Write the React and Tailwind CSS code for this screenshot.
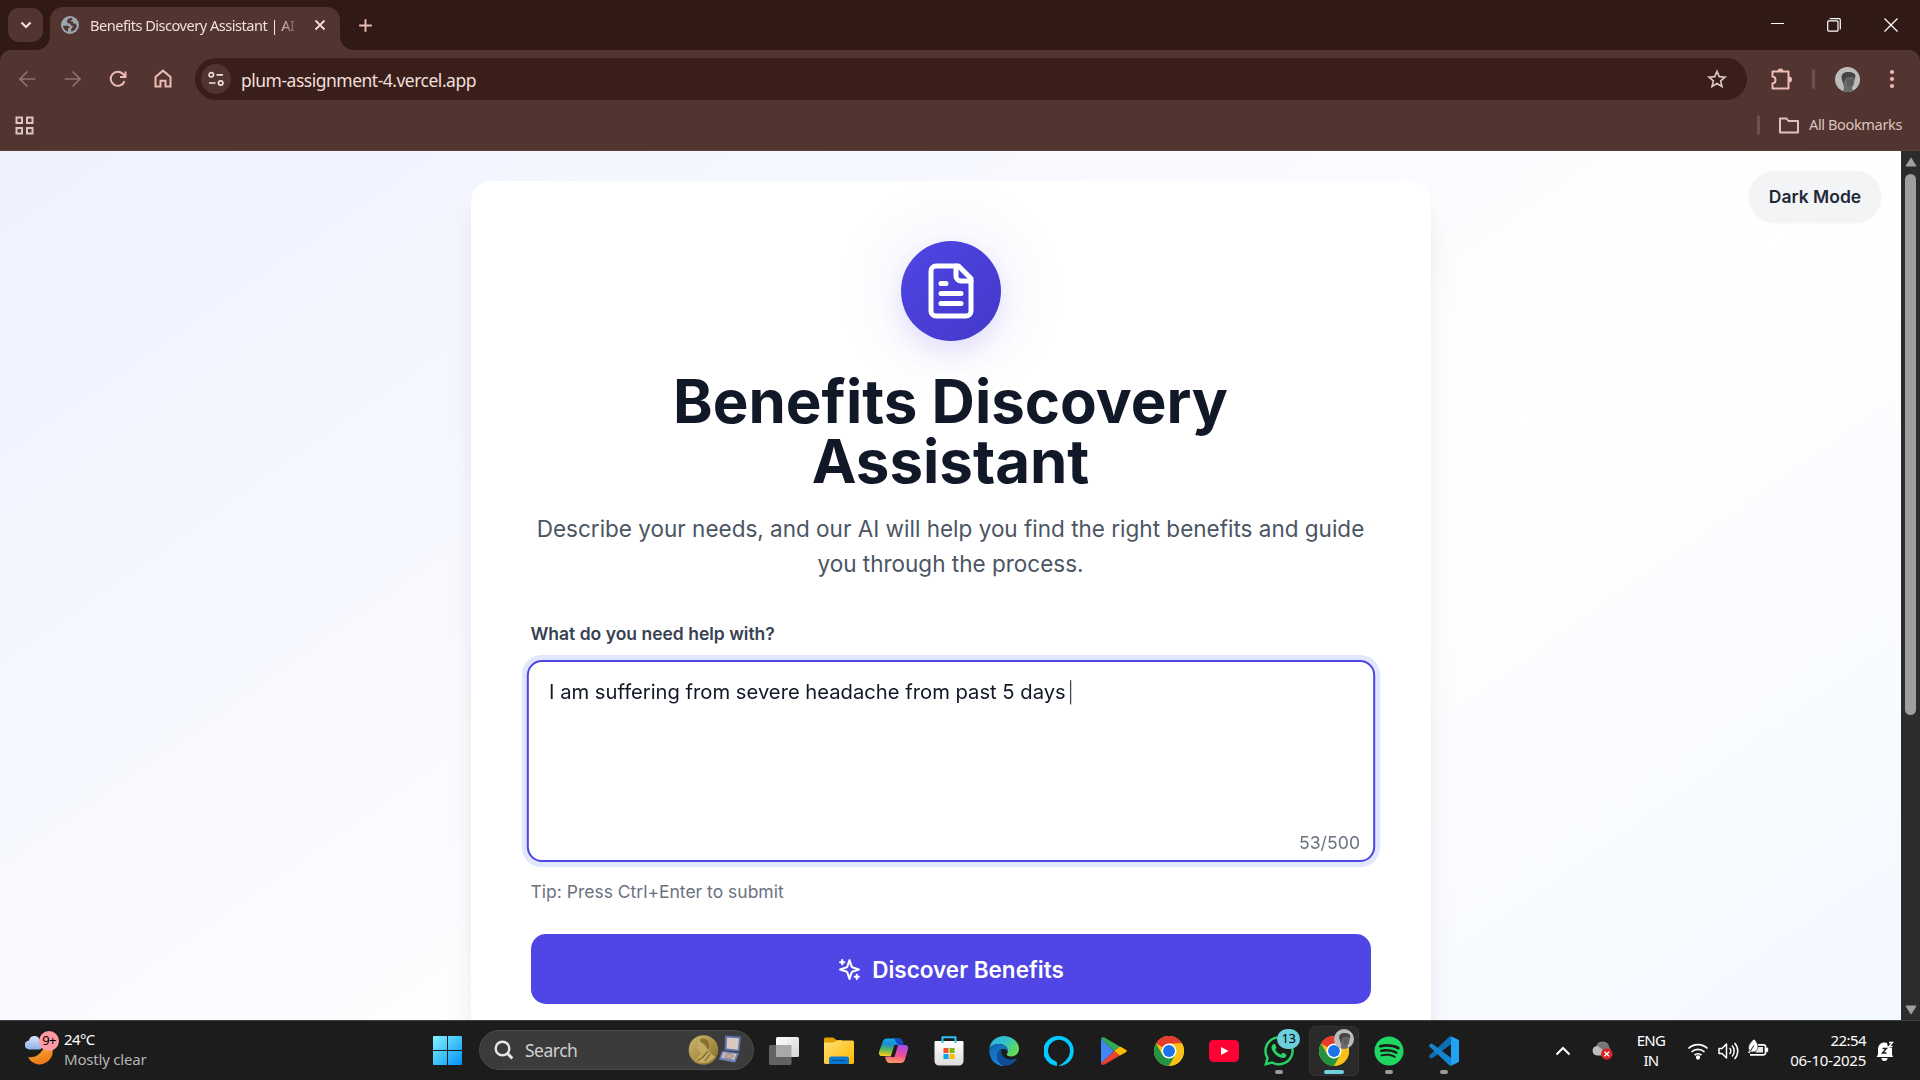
import React from "react";
import { FaSpotify, FaWhatsapp } from "react-icons/fa";

const ui = "font-['Noto_Sans','Open_Sans',sans-serif]";

function Stroke({ size = 20, w = 2, className = "", children, vb = "0 0 24 24" }) {
  return (
    <svg width={size} height={size} viewBox={vb} fill="none" stroke="currentColor" strokeWidth={w} className={`shrink-0 ${className}`}>
      {children}
    </svg>
  );
}

function Avatar({ size }) {
  return (
    <svg width={size} height={size} viewBox="0 0 25 25" className="shrink-0">
      <defs>
        <clipPath id={`av${size}`}><circle cx="12.5" cy="12.5" r="12.5" /></clipPath>
        <filter id={`avb${size}`}><feGaussianBlur stdDeviation="0.6" /></filter>
      </defs>
      <g clipPath={`url(#av${size})`}>
        <rect width="25" height="25" fill="#bcbcbc" />
        <g filter={`url(#avb${size})`}>
          <path d="M8 25l1-4-1-5-1-4V9c1-3 3-4 6-4 4 0 6 1 7 4l-1 8-2 4 1 4z" fill="#6a6a6a" />
          <path d="M6.500 11c-.5-4 3-6 6.500-6 4 0 7 1 7.500 4l-1 4-1-3-7 .5-2 3-1 4z" fill="#454545" />
          <path d="M12 12.500l6-.5v5l-3 3-3-2z" fill="#5c5c5c" />
        </g>
      </g>
    </svg>
  );
}

function TabStrip() {
  return (
    <div className="flex h-[50px] bg-[#311915] text-[#f1dfdb]">
      <div className="ml-2 mt-2 flex h-[34px] w-[35px] items-center justify-center rounded-[11px] bg-[#523430]">
        <Stroke size={20} w={2.6}><path d="M6.5 9l5.5 5.5L17.5 9" /></Stroke>
      </div>
      <div className="flex w-[7px] items-end overflow-visible">
        <svg width="15" height="15" viewBox="0 0 15 15" className="-ml-2 shrink-0"><path d="M15 0v15H0C9 15 15 9 15 0z" fill="#523430" /></svg>
      </div>
      <div className="mt-[7px] flex h-[43px] w-[290px] items-center rounded-t-[13px] bg-[#523430] pb-[7px] pl-[11px]">
        <svg width="18" height="18" viewBox="0 0 18 18" className="shrink-0">
          <circle cx="9" cy="9" r="9" fill="#9aa5ae" />
          <path d="M2 9.800h4.500c1.600 0 2.300 1 2.300 2.300H7v3.600C4.300 15 2.100 12.800 2 9.800z" fill="#523430" />
          <path d="M11.500 2.400C10.500 2 9.500 2 8.700 2.200 7 2.600 6 4 6 5.200c0 1.500 1 2.300 2.500 2.300h.8c0 1.700 1 2.300 2.400 2.300.2 1.800-.4 2.400-1.500 3v2.900c3.400-.7 5.500-3.500 5.500-6.600l-1.300-1.500H12V5.400H9.800V4.200c1 0 1.700-.6 1.700-1.800z" fill="#523430" />
        </svg>
        <div className={`ml-[11px] w-[211px] overflow-hidden whitespace-nowrap text-[14.600px] leading-5 tracking-[-0.51px] ${ui} [mask-image:linear-gradient(to_right,black_188px,transparent_210px)]`}>
          Benefits Discovery Assistant | AI
        </div>
        <Stroke size={18} w={2.400} className="ml-[10px]"><path d="M6 6l12 12M18 6L6 18" /></Stroke>
      </div>
      <div className="flex w-[15px] items-end">
        <svg width="15" height="15" viewBox="0 0 15 15"><path d="M0 0v15h15C6 15 0 9 0 0z" fill="#523430" /></svg>
      </div>
      <div className="flex pt-[16px] pl-[1px] text-[#eebcb4]">
        <Stroke size={19} w={2.4}><path d="M12 4v16M4 12h16" /></Stroke>
      </div>
      <div className="ml-auto flex text-white">
        <div className="flex w-[56px] items-start justify-center pt-[23px]"><div className="h-px w-[13px] bg-white" /></div>
        <div className="flex w-[57px] justify-center pt-[18px]">
          <Stroke size={14} w={1.2} vb="0 0 14 14"><rect x="0.700" y="2.900" width="10.300" height="10.300" rx="1" /><path d="M2.800 .7H12c.8 0 1.300.5 1.300 1.300V11.500" /></Stroke>
        </div>
        <div className="flex w-[58px] justify-center pt-[18px]">
          <Stroke size={14} w={1.3} vb="0 0 14 14"><path d="M.5.5l13 13M13.500.5l-13 13" /></Stroke>
        </div>
      </div>
    </div>
  );
}

function Toolbar() {
  return (
    <div className="h-[101px] bg-[#311915]">
      <div className="h-full rounded-t-[11px] border-b border-[#5e403b] bg-[#523430]">
        <div className="flex h-[58px] items-center">
          <div className="flex w-[195px] items-center pl-[17px] text-[#eebcb4]">
            <Stroke size={20} w={2} className="text-[#92706b]"><path d="M22 12H4M12.500 3L3.500 12l9 9" /></Stroke>
            <Stroke size={20} w={2} className="ml-[26px] text-[#92706b]"><path d="M2 12h18M11.500 3l9 9-9 9" /></Stroke>
            <Stroke size={20} w={2.400} className="ml-[25px]"><path d="M19.800 14.500A8.500 8.500 0 1 1 18.500 6.500L20.500 9M21 3v6.500h-6.500" /></Stroke>
            <Stroke size={20} w={2.400} className="ml-[25px]"><path d="M3 21V9.500l9-7.500 9 7.500V21h-6v-7H9v7z" /></Stroke>
          </div>
          <div className="flex h-[42px] w-[1552px] items-center rounded-full bg-[#391e1a] pl-[6px] pr-[20px] text-[#f1dfdb]">
            <div className="flex h-[30px] w-[30px] items-center justify-center rounded-full bg-[#523430]">
              <Stroke size={16} w={1.700} vb="0 0 16 16"><circle cx="3.300" cy="3.800" r="2.200" /><path d="M8.500 3.800H15M1 12h6.500" /><circle cx="12.700" cy="12" r="2.200" /></Stroke>
            </div>
            <div className={`ml-[10px] mt-[2px] text-[17.500px] leading-6 tracking-[-0.5px] ${ui}`}>plum-assignment-4.vercel.app</div>
            <Stroke size={20} w={2} className="ml-auto text-[#dcc4bf]"><path d="M12 2.800l2.700 6.400 6.900.6-5.200 4.500 1.600 6.800-6-3.600-6 3.600 1.600-6.800-5.200-4.500 6.900-.6z" /></Stroke>
          </div>
          <div className="flex flex-1 items-center text-[#eebcb4]">
            <svg width="22" height="22" viewBox="0 0 22 22" className="ml-[23px]">
              <path d="M2.500 4.500h16v17h-16v-5c4-.5 4-6.500 0-7z" transform="translate(0 -1)" fill="none" stroke="currentColor" strokeWidth="2" strokeLinejoin="round" />
              <path d="M7.500 3.500a3 3 0 0 1 6 0zM19 8.500a3 3 0 0 1 0 6z" fill="currentColor" />
            </svg>
            <div className="ml-[20px] h-[20px] w-[3px] rounded bg-[#72504a]" />
            <div className="ml-[20px]"><Avatar size={25} /></div>
            <svg width="6" height="20" viewBox="0 0 6 20" fill="currentColor" className="ml-[29px]"><circle cx="3" cy="3" r="2.100" /><circle cx="3" cy="10" r="2.100" /><circle cx="3" cy="17" r="2.100" /></svg>
          </div>
        </div>
        <div className="flex h-[34px] items-center pl-[15px] pr-[18px] text-[#dcc4bf]">
          <Stroke size={19} w={2} vb="0 0 19 19"><path d="M1.500 1.500h5.500v5.500H1.500zM12 1.500h5.500v5.500H12zM1.500 12h5.500v5.500H1.500zM12 12h5.500v5.500H12z" /></Stroke>
          <div className="ml-auto h-[20px] w-[3px] rounded bg-[#72504a]" />
          <Stroke size={22} w={2} vb="0 0 22 22" className="ml-[18px]"><path d="M2 4.500h6.500l2 2.500H20v11.500H2z" strokeLinejoin="round" /></Stroke>
          <span className={`ml-[9px] text-[14.600px] tracking-[-0.4px] ${ui}`}>All Bookmarks</span>
        </div>
      </div>
    </div>
  );
}

function Page() {
  return (
    <div className="flex h-[869px] overflow-hidden font-['Inter',sans-serif]">
      <div className="relative h-[1333px] w-[1901px] bg-linear-to-br from-[#eef2ff] via-white to-[#eef4ff] pt-[30px]">
        <button className="absolute right-5 top-5 flex h-[51px] w-[132px] items-center justify-center rounded-full bg-[#f3f4f6] pt-px text-[17.500px] font-semibold text-[#1f2937] shadow-[0_1px_3px_rgba(0,0,0,0.06)]">Dark Mode</button>
        <div className="mx-auto h-[1270px] w-[960px] rounded-[20px] bg-white px-[60px] pt-[60px] shadow-[0_25px_31px_-6px_rgba(0,0,0,0.1),0_10px_12px_-7px_rgba(0,0,0,0.1)]">
          <div className="mx-auto flex h-[100px] w-[100px] items-center justify-center rounded-full bg-linear-to-br from-[#4f46e5] to-[#4338ca] text-white shadow-[0_12px_25px_rgba(79,70,229,0.12),0_0_75px_rgba(79,70,229,0.12)]">
            <svg width="60" height="60" viewBox="0 0 24 24" fill="none" stroke="currentColor" strokeWidth="2" strokeLinecap="round" strokeLinejoin="round">
              <path d="M15 2H6a2 2 0 0 0-2 2v16a2 2 0 0 0 2 2h12a2 2 0 0 0 2-2V7Z" />
              <path d="M14 2v4a2 2 0 0 0 2 2h4M10 9H8M16 13H8M16 17H8" />
            </svg>
          </div>
          <h1 className="mt-[30px] text-center text-[60px] font-bold leading-[60px] text-[#111827]">Benefits Discovery Assistant</h1>
          <p className="mt-5 text-center text-[22.500px] leading-[35px] text-[#4b5563]">Describe your needs, and our AI will help you find the right benefits and guide you through the process.</p>
          <div className="mt-10 text-[17.500px] font-semibold leading-[25px] text-[#374151]">What do you need help with?</div>
          <div className="mt-[15px] flex h-[200px] scale-[1.01] flex-col rounded-[15px] border-2 border-[#4f46e5] bg-white px-5 pb-[5px] pt-[15px] shadow-[0_0_0_5px_#e0e7ff]">
            <div className="flex items-center text-[20px] leading-[30px] text-[#111827]"><span>I am suffering from severe headache from past 5 days</span><span className="ml-[4px] h-[24px] w-px bg-[#111827]" /></div>
            <div className="mt-auto -mr-[7px] text-right text-[17.500px] leading-[25px] text-[#6b7280]">53/500</div>
          </div>
          <div className="mt-[18px] text-[17.500px] leading-[25px] text-[#6b7280]">Tip: Press Ctrl+Enter to submit</div>
          <button className="mt-[30px] flex h-[70px] w-full items-center justify-center gap-[10px] rounded-[15px] bg-[#4f46e5] text-[22.500px] font-semibold text-white">
            <svg width="25" height="25" viewBox="0 0 24 24" fill="none" stroke="currentColor" strokeWidth="2" strokeLinecap="round" strokeLinejoin="round">
              <path d="m12 3-1.912 5.813a2 2 0 0 1-1.275 1.275L3 12l5.813 1.912a2 2 0 0 1 1.275 1.275L12 21l1.912-5.813a2 2 0 0 1 1.275-1.275L21 12l-5.813-1.912a2 2 0 0 1-1.275-1.275L12 3Z" />
              <path d="M5 3v4M19 17v4M3 5h4M17 19h4" />
            </svg>
            <span className="pt-px">Discover Benefits</span>
          </button>
        </div>
      </div>
      <div className="flex h-full w-[19px] flex-col items-center bg-[#2c2c2c] pt-[6px] pb-[5px]">
        <svg width="12" height="10" viewBox="0 0 12 10" fill="#9f9f9f" stroke="#9f9f9f" strokeLinejoin="round"><path d="M6 1l5 8H1z" /></svg>
        <div className="mt-[7px] h-[541px] w-[11px] rounded-full bg-[#9f9f9f]" />
        <svg width="12" height="10" viewBox="0 0 12 10" fill="#9f9f9f" stroke="#9f9f9f" strokeLinejoin="round" className="mt-auto"><path d="M6 9l5-8H1z" /></svg>
      </div>
    </div>
  );
}

function ChromeLogo() {
  return (
    <svg width="30" height="30" viewBox="0 0 48 48">
      <circle cx="24" cy="24" r="24" fill="#fbc116" />
      <path d="M24 24L3.200 12A24 24 0 0 1 44.800 12z" fill="#e33b2e" />
      <path d="M24 12h20.800L34.400 30 24 24z" fill="#fbc116" />
      <path d="M3.200 12L13.600 30 24 36l-.2 12A24 24 0 0 1 3.200 12z" fill="#229342" />
      <path d="M24 48L34.400 30 24 24 13.600 30 24 36z" fill="#229342" />
      <path d="M24 48L34.400 30V12h10.400A24 24 0 0 1 24 48z" fill="#fbc116" />
      <circle cx="24" cy="24" r="12" fill="white" />
      <circle cx="24" cy="24" r="9.500" fill="#1a73e8" />
    </svg>
  );
}

function Slot({ children, bar }) {
  return (
    <div className="relative flex h-full w-[55px] items-center justify-center">
      {children}
      {bar && <div className={`absolute bottom-[6px] left-1/2 h-[4px] -translate-x-1/2 rounded-full ${bar}`} />}
    </div>
  );
}

function Apps() {
  return (
    <>
      <Slot>
        <svg width="30" height="30" viewBox="0 0 30 30"><defs><linearGradient id="tv" x2="1" y2="1"><stop stopColor="#fff" /><stop offset="1" stopColor="#d4d4d4" /></linearGradient></defs><rect y="9" width="22.500" height="20" rx="1.500" fill="#626262" /><rect x="7" y="1" width="23" height="20" rx="1.500" fill="url(#tv)" /><path d="M7 9h15.500v12H8a1 1 0 0 1-1-1z" fill="#a9a9a9" /></svg>
      </Slot>
      <Slot>
        <svg width="30" height="28" viewBox="0 0 30 28"><defs><linearGradient id="fe" x2="1" y2="1"><stop stopColor="#ffdf74" /><stop offset="1" stopColor="#ffb900" /></linearGradient></defs><path d="M0 2a1.500 1.500 0 0 1 1.500-1.500H9c1.500 0 2 2.500 4 2.500h5v6H0z" fill="#e19f00" /><path d="M0 5.500h9c2 0 3-2 5-2h14.500A1.500 1.500 0 0 1 30 5v20.500a1.500 1.500 0 0 1-1.500 1.500h-27A1.500 1.500 0 0 1 0 25.500z" fill="url(#fe)" /><path d="M5 27v-5a2.500 2.500 0 0 1 2.500-2.500h15A2.500 2.500 0 0 1 25 22v5z" fill="#0b78cf" /><path d="M8.500 23.500h13" stroke="#08518c" strokeWidth="1.200" /></svg>
      </Slot>
      <Slot>
        <svg width="30" height="28" viewBox="0 0 30 28">
          <defs>
            <linearGradient id="cp1" x1="0.500" y1="0" x2="0.350" y2="1"><stop stopColor="#0fb0e8" /><stop offset="0.350" stopColor="#1d8bd0" /><stop offset="0.650" stopColor="#58b85a" /><stop offset="1" stopColor="#ffcb1b" /></linearGradient>
            <linearGradient id="cp2" x1="0.600" y1="0" x2="0.400" y2="1"><stop stopColor="#a84ae8" /><stop offset="0.550" stopColor="#ee5091" /><stop offset="1" stopColor="#ff9a5c" /></linearGradient>
          </defs>
          <path d="M8 1.500h12c2 0 3 1.500 3.500 3L24.500 8H21c-2 0-3 1-3.500 3l-2.500 8H3c-2.500 0-3.500-2-3-4L3.500 5C4.200 3 5.500 1.500 8 1.500z" fill="url(#cp1)" />
          <path d="M14 1.500h6c2 0 3 1.500 3.500 3L24.500 8H20c-2.500 0-3.500-6.500-6-6.500z" fill="#1547c4" />
          <path d="M22 26H10.500c-2 0-3-1.500-3.500-3L6 19.500h3.500c2 0 3-1 3.500-3L15.500 8H26c2.500 0 3.500 2 3 4l-3 10.500C25.300 24.500 24 26 22 26z" fill="url(#cp2)" />
          <path d="M15.500 8h3.500L15.500 20H11.500z" fill="#1c1c1c" />
        </svg>
      </Slot>
      <Slot>
        <svg width="30" height="30" viewBox="0 0 30 30"><defs><linearGradient id="ms" x2="0" y2="1"><stop stopColor="#fff" /><stop offset="1" stopColor="#dcdcdc" /></linearGradient></defs><path d="M8.500 7V1.200h13V7" fill="none" stroke="#2fc0f2" strokeWidth="2" /><path d="M.5 6a1 1 0 0 1 1-1h27a1 1 0 0 1 1 1v19a4.500 4.500 0 0 1-4.500 4.500H5A4.500 4.500 0 0 1 .5 25z" fill="url(#ms)" /><path d="M8.500 5V7M21.500 5v2" stroke="#2fc0f2" strokeWidth="2" /><rect x="9.500" y="12" width="5" height="5" fill="#f25022" /><rect x="15.500" y="12" width="5" height="5" fill="#7fba00" /><rect x="9.500" y="18" width="5" height="5" fill="#00a4ef" /><rect x="15.500" y="18" width="5" height="5" fill="#ffb900" /></svg>
      </Slot>
      <Slot>
        <svg width="30" height="30" viewBox="0 0 30 30">
          <defs><linearGradient id="ed" x2="1" y2="0.500"><stop stopColor="#2baee8" /><stop offset="0.550" stopColor="#34c2c8" /><stop offset="1" stopColor="#62dc54" /></linearGradient><linearGradient id="ed2" x2="0.600" y2="1"><stop stopColor="#1360b0" /><stop offset="1" stopColor="#1489dc" /></linearGradient></defs>
          <path d="M.3 13C1.200 5 7.500 0 15 0c8.500 0 15 6.200 15 12.800 0 5-3.800 7.700-7.800 7.700-3.200 0-4.700-1.100-4.700-2 0-.7 1.300-1.500 1.300-3.500C18.800 10 14 8 10 8 5 8 1.500 10.500.3 13z" fill="url(#ed)" />
          <path d="M.2 14C1.500 10.500 5 8 9.500 8c5 0 9.300 3 9.300 7l-.8 2.200C17 14.800 15.500 13 13.500 13 10 13.500 8 17 8 20.500c0 4.500 3.500 8 7.500 9.400C7 30.200 0 23.500.2 14z" fill="url(#ed2)" />
          <path d="M12.500 13.700C8.500 15 7.300 18.500 8 21.500c1 5 6 8.500 10.500 8 4-.8 7.500-3 9.300-6.300.3-.6-.2-1-.8-.7-1.500.7-3.300 1-5 1-6 0-11-4-9.500-9.800z" fill="#104d98" />
          <path d="M14.500 12.800c2.300 0 4 1.500 4 3.200 0 1.300-1 2-1 2.800 0 .7 1 1.500 2.500 1.700-3 .6-6-1-6.800-3.500-.5-1.700 0-3.600 1.300-4.200z" fill="#1c1c1c" />
        </svg>
      </Slot>
      <Slot>
        <svg width="30" height="30" viewBox="0 0 30 30"><path d="M15 0a15 15 0 0 0-2.300 29.900c.2 0 .3-.1.300-.3v-2.200c0-1-.6-1.800-1.500-2.200A11 11 0 1 1 26 15c0 7.500-7.500 13-11.500 15A15 15 0 0 0 15 0z" fill="#00caff" /></svg>
      </Slot>
      <Slot>
        <svg width="28" height="30" viewBox="0 0 28 30"><path d="M1 2.500v25L14 15z" fill="#4285f4" /><path d="M1 2.500C1.500 1 3 .8 4.500 1.600L20 10.500 14 15z" fill="#34a853" /><path d="M1 27.500c.5 1.500 2 1.700 3.500.9L20 19.500 14 15z" fill="#ea4335" /><path d="M20 10.500l6 3.300c1 .6 1 1.800 0 2.400l-6 3.300-6-4.500z" fill="#fbbc04" /></svg>
      </Slot>
      <Slot><ChromeLogo /></Slot>
      <Slot>
        <svg width="30" height="22" viewBox="0 0 30 22"><rect width="30" height="22" rx="4.500" fill="#ff0033" /><path d="M12 7v8l7.500-4z" fill="#fff" /></svg>
      </Slot>
      <Slot bar="w-[8px] bg-[#9a9a9a]">
        <FaWhatsapp size={34} color="#25d366" />
        <div className={`absolute left-[26px] top-[8px] flex h-[20px] w-[23px] items-center justify-center rounded-full bg-[#6cd0dc] text-[13px] tracking-[-0.5px] text-black ${ui}`}>13</div>
      </Slot>
      <Slot bar="w-[20px] bg-[#72d0dc]">
        <div className="flex h-[50px] w-[50px] items-center justify-center rounded-[6px] border border-[#333] bg-[#2a2a2a]"><ChromeLogo /></div>
        <div className="absolute left-[28px] top-[8px]"><Avatar size={20} /></div>
      </Slot>
      <Slot bar="w-[8px] bg-[#9a9a9a]"><FaSpotify size={30} color="#1ed760" /></Slot>
      <Slot bar="w-[8px] bg-[#9a9a9a]">
        <svg width="30" height="30" viewBox="0 0 30 30"><path d="M22 .3L29 3.500a1.500 1.500 0 0 1 1 1.500v20a1.500 1.500 0 0 1-1 1.500l-7 3.200z" fill="#22a2f2" /><path d="M22 8.200L3.200 22.300c-.5.400-1 .4-1.500 0L.4 21c-.5-.5-.5-1 0-1.500L20 1c.7-.7 1.500-.9 2.500-.6z" fill="#0d6fb8" /><path d="M22 21.800L3.200 7.700c-.5-.4-1-.4-1.500 0L.4 9c-.5.500-.5 1 0 1.500L20 29c.7.700 1.500.9 2.500.6z" fill="#1685cf" /></svg>
      </Slot>
    </>
  );
}

function Taskbar() {
  return (
    <div className={`flex h-[60px] border-t border-[#404040] bg-[#1c1c1c] text-white ${ui}`}>
      <div className="flex w-[433px] items-center pl-[25px]">
        <div className="relative -mt-[4px] h-[36px] w-[36px]">
          <svg width="34" height="36" viewBox="0 0 34 36">
            <defs><linearGradient id="mn" x2="0.300" y2="1"><stop stopColor="#f9c33a" /><stop offset="1" stopColor="#ee7a1c" /></linearGradient><linearGradient id="cl" x2="0" y2="1"><stop stopColor="#d9e6fb" /><stop offset="1" stopColor="#8fb0ea" /></linearGradient></defs>
            <path d="M21 10a13 13 0 1 1-18 17c8 1.500 16-4 18-17z" fill="url(#mn)" transform="translate(0 -1)" />
            <path d="M4.500 18.500a4.500 4.500 0 0 1-.5-9A5.500 5.500 0 0 1 14.500 8.500c4 0 4.500 10 0 10z" fill="url(#cl)" />
          </svg>
          <div className="absolute left-[14px] top-0 flex h-[20px] w-[20px] items-center justify-center rounded-full bg-[#ff99a4] text-[13px] tracking-[-0.8px] text-black">9+</div>
        </div>
        <div className="-mt-[3px] ml-[3px] flex flex-col text-[15px] leading-[20px] tracking-[-0.2px]"><span className="tracking-[-0.6px]">24°C</span><span className="text-[#b4b4b4]">Mostly clear</span></div>
      </div>
      <div className="flex items-center">
        <svg width="29" height="29" viewBox="0 0 29 29"><defs><linearGradient id="wn" gradientUnits="userSpaceOnUse" x1="0" y1="0" x2="29" y2="29"><stop stopColor="#84f3ff" /><stop offset="1" stopColor="#0091f8" /></linearGradient></defs><path d="M0 1a1 1 0 0 1 1-1h13v14H0zM15 0h13a1 1 0 0 1 1 1v13H15zM0 15h14v14H1a1 1 0 0 1-1-1zM15 15h14v13a1 1 0 0 1-1 1H15z" fill="url(#wn)" /></svg>
      </div>
      <div className="ml-[17px] mt-[9px] flex h-[40px] w-[275px] items-center rounded-full border border-[#4a4a4a] bg-[#3b3b3b] pl-[14px] pr-[11px]">
        <Stroke size={20} w={2.400} vb="0 0 20 20" className="text-[#e6e6e6]"><circle cx="8.500" cy="8.500" r="6.800" /><path d="M13.300 13.300l5 5.200" strokeWidth="3" /></Stroke>
        <span className="ml-[11px] mt-px text-[17.500px] tracking-[-0.5px] text-[#cfcfcf]">Search</span>
        <svg width="54" height="32" viewBox="0 0 54 32" className="ml-auto">
          <defs>
            <linearGradient id="md" x2="1" y2="1"><stop stopColor="#cfbb72" /><stop offset="0.500" stopColor="#ab9248" /><stop offset="1" stopColor="#80692b" /></linearGradient>
            <filter id="sf"><feGaussianBlur stdDeviation="0.4" /></filter>
          </defs>
          <circle cx="15.500" cy="16" r="14.800" fill="url(#md)" />
          <g filter="url(#sf)">
            <path d="M10 8.500C11 4 19 3.500 21 8c1 3 .5 5-.5 7l1.500 4 5 3.500a14 14 0 0 1-20 4l5-5.500 2-2.500-3.500-.5.3-2.500-2-1.500 1.500-2z" fill="#c2ab60" />
            <path d="M12 6c3-3 8-1 9 3 .8 3 0 5-1 7-1-2-2-3-3-5-1-2-4-1-5-5z" fill="#86702f" />
            <path d="M20 17l-5 6-6 4M22 20l-5 7" fill="none" stroke="#7c662a" strokeWidth="1.200" />
          </g>
          <path d="M37 1.500l16 1-1.500 15-15-1z" fill="#5a6fae" /><path d="M39 3.500l12 .8-1 11.500L38.500 14.500z" fill="#d9c8bd" />
          <path d="M34 17l17 2-4 9.500-16-3z" fill="#7183bb" /><path d="M35.500 18.500l13 1.600-2.500 5.700-12.500-2.300z" fill="#d5c6be" /><ellipse cx="41" cy="22" rx="4.500" ry="2.300" fill="#b9a99f" stroke="#8f8078" strokeWidth=".8" />
        </svg>
      </div>
      <div className="ml-[2px] flex h-full items-center"><Apps /></div>
      <div className="ml-auto flex items-center pr-[26px]">
        <Stroke size={16} w={2} vb="0 0 16 16"><path d="M1.500 11.500L8 5l6.500 6.500" /></Stroke>
        <svg width="22" height="20" viewBox="0 0 22 20" className="ml-[21px]"><path d="M5 14.500a4.800 4.800 0 0 1-.5-9.500A6.500 6.500 0 0 1 17 6l1 8.500z" fill="#bdbdbd" /><path d="M5 4.500C8-.5 15 0 16.500 5L19 9H11z" fill="#777" /><circle cx="14.800" cy="13" r="5.800" fill="#d9252a" /><path d="M12.500 10.700l4.600 4.600M17.100 10.700l-4.600 4.600" stroke="#fff" strokeWidth="1.400" /></svg>
        <div className="-mt-[2px] ml-[21px] w-[32px] text-center text-[15px] leading-[20px] tracking-[-0.7px]">ENG<br />IN</div>
        <Stroke size={22} w={1.700} vb="0 0 22 22" className="ml-[20px]"><path d="M1.500 8.500a13.500 13.500 0 0 1 19 0M4.500 12a9.300 9.300 0 0 1 13 0M7.500 15.200a5 5 0 0 1 7 0" /><circle cx="11" cy="17.500" r="1.300" fill="currentColor" /></Stroke>
        <Stroke size={22} w={1.500} vb="0 0 22 22" className="ml-[8px]"><path d="M2 8.500h3L9.500 4v14L5 13.500H2z" strokeLinejoin="round" /><path d="M12.500 8a4 4 0 0 1 0 6M15 5.500a8 8 0 0 1 0 11M17.500 3a11.500 11.500 0 0 1 0 16" /></Stroke>
        <svg width="22" height="20" viewBox="0 0 22 20" className="-mt-[3px] ml-[8px]"><path d="M11 5.800h5.700a1.800 1.800 0 0 1 1.800 1.800v6.400a1.800 1.800 0 0 1-1.800 1.800H3" fill="none" stroke="#fff" strokeWidth="1.700" /><path d="M19.500 9h1.200v3.500h-1.200z" fill="#fff" stroke="#fff" /><path d="M10.500 8H16v5.500H8.500z" fill="#fff" opacity=".9" /><path d="M7 0c3.500 3.500 5 7 3.200 10.500-1.300 2.400-3.800 2.900-6.200 2.200L2.400 14.500.7 13.500l1.500-2.300C0 7 3.500 3.500 7 0z" fill="#fff" stroke="#1c1c1c" strokeWidth=".6" /><path d="M3 12.500L7 6.500" stroke="#1c1c1c" strokeWidth="1" /></svg>
        <div className="-mt-[2px] ml-[11px] w-[86px] text-right text-[15px] leading-[20px] tracking-[-0.55px]">22:54<br /><span className="tracking-[-0.25px]">06-10-2025</span></div>
        <svg width="18" height="20" viewBox="0 0 18 20" className="ml-[10px]"><path d="M2 8a6.500 6.500 0 0 1 9-6l1 4 4 1v6.500l1 2.500H.5L2 13.500z" fill="#fff" /><path d="M5.500 17a3 3 0 0 0 6 0z" fill="#fff" /><path d="M6.500 7.500h4L6.500 12h4" fill="none" stroke="#1c1c1c" strokeWidth="1.400" /><path d="M13 1.500h3.500L13 5.500h3.500" fill="none" stroke="#fff" strokeWidth="1.300" /></svg>
      </div>
    </div>
  );
}

export default function App() {
  return (
    <div className="flex h-[1080px] w-[1920px] flex-col overflow-hidden">
      <TabStrip />
      <Toolbar />
      <Page />
      <Taskbar />
    </div>
  );
}
